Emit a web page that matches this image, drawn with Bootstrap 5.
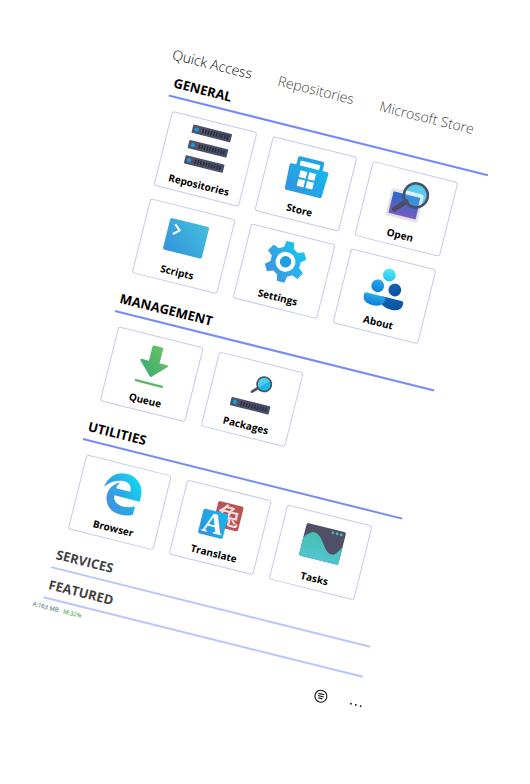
<!DOCTYPE html>
<html lang="en">
<head>
<meta charset="utf-8">
<meta name="viewport" content="width=device-width, initial-scale=1">
<title>Quick Access</title>
<link href="https://cdn.jsdelivr.net/npm/bootstrap@5.3.0/dist/css/bootstrap.min.css" rel="stylesheet">
<style>
body { display: flow-root; font-family: "Open Sans", "Noto Sans", sans-serif; background: #fff; color: #000; }
.board { max-width: 345px; margin: 41px 0 0 173px; transform: rotate(14deg); transform-origin: 0 0; }
.tabs { padding: 3px 0 1px 3px; gap: 27px; }
.tabs .nav-link { padding: 0; font-size: 14px; line-height: 20px; font-weight: 300; color: #444; white-space: nowrap; }
.tabs .nav-link.active { color: #000; }
.sections { padding: 0 7px 0 9px; }
.group-head { width: 100%; height: 31px; padding: 2px 0 0 2px; border: 0; border-bottom: 2px solid #748bff; background: none; text-align: left; font-size: 13px; line-height: 18px; font-weight: 700; color: #000; }
.group-head.faded { opacity: .75; border-color: #a2b2ff; }
.tiles { display: grid; grid-template-columns: repeat(3, 1fr); gap: 13px 16px; padding: 13px 27px 11px 7px; }
.tile { height: 77px; padding: 5px 0 0; border: 1px solid #c6c9ea; border-radius: 3px; background: #fff; color: #000; font-size: 10px; line-height: 14px; font-weight: 700; }
.tile svg { width: 44px; height: 44px; margin-bottom: 8px; overflow: visible; }
.stats { font-size: 6px; line-height: 8px; gap: 5px; padding-top: 4px; color: #2d6070; }
.stats .memory { color: #149014; }
.tools { gap: 22px; margin-top: 9px; }
.tools button { padding: 0; border: 0; background: none; line-height: 0; color: #111; }
</style>
</head>
<body class="min-vh-100">
<svg width="0" height="0" class="position-absolute" aria-hidden="true">
  <defs>
    <linearGradient id="gBlue" x1="0" y1="1" x2="1" y2="0"><stop offset="0" stop-color="#3291dc"/><stop offset="1" stop-color="#15b9ef"/></linearGradient>
    <linearGradient id="gCode" x1="0" y1="1" x2="1" y2="0"><stop offset="0" stop-color="#3393dc"/><stop offset="1" stop-color="#43bfdc"/></linearGradient>
    <linearGradient id="gGear" x1="0" y1="1" x2="1" y2="0"><stop offset="0" stop-color="#4789db"/><stop offset="1" stop-color="#10d0f2"/></linearGradient>
    <linearGradient id="gEdge" x1="0" y1="1" x2="1" y2="0"><stop offset="0" stop-color="#4788db"/><stop offset=".45" stop-color="#2da5e2"/><stop offset="1" stop-color="#08e4f5"/></linearGradient>
    <linearGradient id="gGreen" x1="0" y1="1" x2="1" y2="0"><stop offset="0" stop-color="#38a47c"/><stop offset="1" stop-color="#70cb5c"/></linearGradient>
    <linearGradient id="gPhoto" x1="0" y1="0" x2="0" y2="1"><stop offset="0" stop-color="#2668c6"/><stop offset="1" stop-color="#7a5cc0"/></linearGradient>
    <linearGradient id="gHead" x1="0" y1="0" x2="0" y2="1"><stop offset="0" stop-color="#50e9fb"/><stop offset="1" stop-color="#2bc4f0"/></linearGradient>
    <linearGradient id="gMid" x1="0" y1="0" x2="0" y2="1"><stop offset="0" stop-color="#2aaaf0"/><stop offset="1" stop-color="#0c7cd8"/></linearGradient>
    <linearGradient id="gDark" x1="0" y1="0" x2="1" y2="1"><stop offset="0" stop-color="#0d66bd"/><stop offset="1" stop-color="#0f4f96"/></linearGradient>
    <linearGradient id="gUnit" x1="0" y1="0" x2="1" y2="0"><stop offset="0" stop-color="#555361"/><stop offset="1" stop-color="#42506b"/></linearGradient>
    <linearGradient id="gTeal" x1="0" y1="0" x2="0" y2="1"><stop offset="0" stop-color="#46bfae"/><stop offset="1" stop-color="#52c4d0"/></linearGradient>
    <linearGradient id="gLens" x1="0" y1="0" x2="1" y2="1"><stop offset="0" stop-color="#5cd3ee"/><stop offset=".5" stop-color="#4accec"/><stop offset=".52" stop-color="#20b5e8"/><stop offset="1" stop-color="#20b5e8"/></linearGradient>
    <g id="unit">
      <rect width="40" height="8.5" rx=".8" fill="url(#gUnit)"/>
      <circle cx="4.4" cy="4.2" r="2.1" fill="#129be8"/>
      <path d="M11 2v4.5M13.8 2v4.5M16.6 2v4.5M19.4 2v4.5M22.2 2v4.5M25 2v4.5M27.8 2v4.5M30.6 2v4.5M33.4 2v4.5M36.2 2v4.5" stroke="#2b2d3d" stroke-width="1.4"/>
    </g>
  </defs>
</svg>

<main class="board">
  <nav class="nav tabs flex-nowrap" aria-label="Views">
    <a class="nav-link active" href="#quick" aria-current="page">Quick Access</a>
    <a class="nav-link" href="#repositories">Repositories</a>
    <a class="nav-link" href="#store">Microsoft Store</a>
  </nav>

  <div class="sections" id="quick">
    <section>
      <button class="group-head d-block" type="button">GENERAL</button>
      <div class="tiles">
        <button class="tile d-flex flex-column align-items-center" type="button">
          <svg viewBox="0 0 44 44"><use href="#unit" x="2" y="2"/><use href="#unit" x="2" y="17.8"/><use href="#unit" x="2" y="33.5"/></svg>
          Repositories
        </button>
        <button class="tile d-flex flex-column align-items-center" type="button">
          <svg viewBox="0 0 44 44">
            <path d="M8.500 17V9q0-2 2-2h23q2 0 2 2v8h-3.500v-6h-20v6z" fill="#20a5e2"/>
            <path d="M3.500 16h37q1.500 0 1.500 1.500L41 41q0 2-2 2H5q-2 0-2-2L2 17.500Q2 16 3.500 16z" fill="url(#gBlue)"/>
            <path d="M14 20.500h7v7h-7zM23 20.500h7v7H23zM14 29.500h7v7h-7zM23 29.500h7v7h-7z" fill="#fff"/>
          </svg>
          Store
        </button>
        <button class="tile d-flex flex-column align-items-center" type="button">
          <svg viewBox="0 0 44 44">
            <rect x="3" y="15.500" width="33" height="28" rx="2" fill="#e2e3e6"/>
            <rect x="5.500" y="18.500" width="28" height="22" fill="url(#gPhoto)"/>
            <circle cx="28" cy="17" r="12" fill="#56cdec"/>
            <path d="M17 14.500h16q3 0 3 3v7q-3 4-8 4-8 0-11-7z" fill="#d9eef6"/>
            <path d="M16.500 18.500H33v8q-7 4-12.500.5-3.500-3-4-8.500z" fill="#3a8fd8"/>
            <path d="M10.500 35.500L20 25.500" stroke="#4c4d63" stroke-width="5" stroke-linecap="round"/>
            <circle cx="28" cy="17" r="12" fill="none" stroke="#4c4f68" stroke-width="2.600"/>
          </svg>
          Open
        </button>
        <button class="tile d-flex flex-column align-items-center" type="button">
          <svg viewBox="0 0 44 44">
            <rect x="2.400" y="8" width="40" height="32.500" rx="2" fill="url(#gCode)"/>
            <path d="M8.500 13.200l5.800 5-5.800 5.200" fill="none" stroke="#fff" stroke-width="2"/>
          </svg>
          Scripts
        </button>
        <button class="tile d-flex flex-column align-items-center" type="button">
          <svg viewBox="0 0 44 44">
            <path fill="url(#gGear)" fill-rule="evenodd" d="M17.600 2.500h8l1 6.200 4.800 2.800 5.900-2.300 4 6.900-4.900 4v5.800l4.900 4-4 6.900-5.900-2.300-4.800 2.800-1 6.200h-8l-1-6.200-4.800-2.800-5.900 2.300-4-6.900 4.900-4v-5.800l-4.900-4 4-6.900 5.900 2.300 4.800-2.800zM21.600 13.100a9.900 9.900 0 1 0 0 19.800 9.900 9.900 0 0 0 0-19.800z"/>
            <circle cx="21.600" cy="23" r="5.700" fill="#229ee0"/>
          </svg>
          Settings
        </button>
        <button class="tile d-flex flex-column align-items-center" type="button">
          <svg viewBox="0 0 44 44">
            <circle cx="21.600" cy="10.800" r="6.400" fill="url(#gHead)"/>
            <circle cx="12.900" cy="24" r="6.400" fill="url(#gMid)"/>
            <circle cx="30.500" cy="24" r="6.400" fill="url(#gDark)"/>
            <path d="M20 33h19.500q2.500 0 2.500 2.500 0 8.500-10.500 8.500-8 0-11.500-4z" fill="url(#gDark)"/>
            <path d="M4 33h16.500q3 0 3 3 0 3-3 5.800-3 2.200-7.500 2.200Q1.500 44 1.500 35.500 1.500 33 4 33z" fill="url(#gMid)"/>
          </svg>
          About
        </button>
      </div>
    </section>

    <section>
      <button class="group-head d-block" type="button">MANAGEMENT</button>
      <div class="tiles">
        <button class="tile d-flex flex-column align-items-center" type="button">
          <svg viewBox="0 0 44 44">
            <path d="M17.500 4h8q1.500 0 1.500 1.500V20h8q2 .5.500 2L22.500 35q-1 .8-2 0L8 22q-1.500-1.500.5-2H16V5.500Q16 4 17.500 4z" fill="url(#gGreen)"/>
            <rect x="7" y="41" width="29" height="2.300" rx="1" fill="#58b868"/>
          </svg>
          Queue
        </button>
        <button class="tile d-flex flex-column align-items-center" type="button">
          <svg viewBox="0 0 44 44">
            <path d="M20.500 25l5-5" stroke="#4c4d63" stroke-width="2.600" stroke-linecap="round"/>
            <circle cx="30.500" cy="15" r="7.200" fill="url(#gLens)" stroke="#465773" stroke-width="1.700"/>
            <use href="#unit" x="2" y="35"/>
          </svg>
          Packages
        </button>
      </div>
    </section>

    <section>
      <button class="group-head d-block" type="button">UTILITIES</button>
      <div class="tiles">
        <button class="tile d-flex flex-column align-items-center" type="button">
          <svg viewBox="0 0 44 44">
            <path transform="translate(.8 2.500) scale(.083)" fill="url(#gEdge)" d="M25.710 228.160l.350-.480c0 .160 0 .320-.070.480zm460.580 15.510c0-44-7.760-84.460-28.810-122.400C416.500 47.880 343.910 8 258.890 8 119 7.720 40.620 113.210 26.060 227.680c42.420-61.310 117.070-121.370 220.370-125 0 0 109.670 0 99.420 105H170c6.370-37.390 18.550-59 34.340-78.930-75.050 34.900-121.850 96.100-120.750 188.320.830 71.450 50.130 144.840 120.750 172 83.350 31.840 192.770 7.200 240.130-21.330V363.310C363.600 419.800 173.600 424.230 172.210 295.740H486.290z"/>
          </svg>
          Browser
        </button>
        <button class="tile d-flex flex-column align-items-center" type="button">
          <svg viewBox="0 0 44 44">
            <rect x="14.500" y="7" width="26" height="25.500" rx="2" fill="#b95355"/>
            <text x="16.500" y="28" font-family="Noto Sans CJK SC, sans-serif" font-size="23" font-weight="500" fill="#f3dede">兔</text>
            <rect x="2" y="18" width="25.500" height="25.500" rx="2" fill="url(#gBlue)"/>
            <text x="14.700" y="40" text-anchor="middle" font-family="Liberation Serif, serif" font-size="29" font-weight="700" fill="#fff">A</text>
          </svg>
          Translate
        </button>
        <button class="tile d-flex flex-column align-items-center" type="button">
          <svg viewBox="0 0 44 44">
            <rect x="1.500" y="7" width="40.500" height="33.500" rx="2" fill="#4f5068"/>
            <path d="M1.500 22C5 17 8 14.500 11.500 14.500c9 0 13 17.500 21.500 17.500 4 0 6-5 9-9.500v16q0 2-2 2h-36.500q-2 0-2-2z" fill="url(#gTeal)"/>
            <circle cx="29" cy="10.500" r="1.300" fill="#4cc5b4"/><circle cx="33.400" cy="10.500" r="1.300" fill="#4cc5b4"/><circle cx="37.800" cy="10.500" r="1.300" fill="#4cc5b4"/>
          </svg>
          Tasks
        </button>
      </div>
    </section>

    <section><button class="group-head faded d-block" type="button">SERVICES</button></section>
    <section><button class="group-head faded d-block" type="button">FEATURED</button></section>
  </div>

  <footer>
    <div class="stats d-flex"><span>A:163 MB</span><span class="memory">M:32%</span></div>
    <div class="tools d-flex justify-content-end align-items-center">
      <button type="button" aria-label="Filter">
        <svg width="14" height="14" viewBox="0 0 14 14" fill="none" stroke="currentColor" stroke-width="1.100"><circle cx="7" cy="7" r="6"/><path d="M4 4.800h6M4 7h6M4.800 9.200h4.400"/></svg>
      </button>
      <button type="button" aria-label="More">
        <svg width="14" height="14" viewBox="0 0 14 14" fill="currentColor"><circle cx="2" cy="7" r=".900"/><circle cx="7" cy="7" r=".900"/><circle cx="12" cy="7" r=".900"/></svg>
      </button>
    </div>
  </footer>
</main>
<script src="https://cdn.jsdelivr.net/npm/bootstrap@5.3.0/dist/js/bootstrap.bundle.min.js"></script>
</body>
</html>
